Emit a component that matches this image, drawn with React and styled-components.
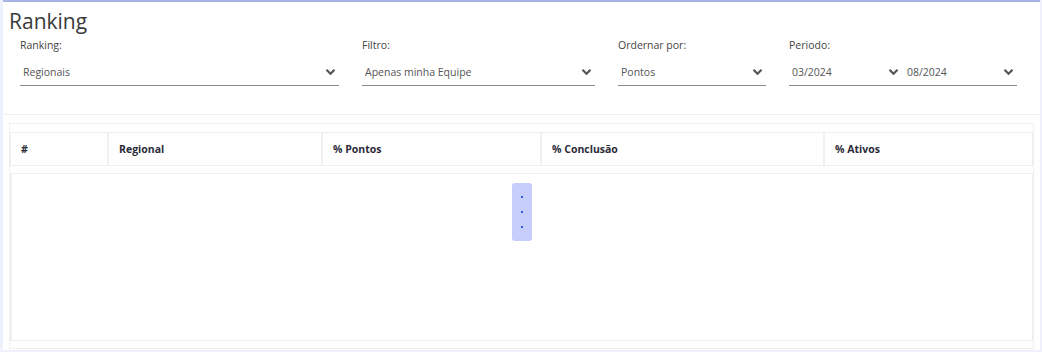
import styled, { createGlobalStyle } from 'styled-components';

const GlobalStyle = createGlobalStyle`
  html, body {
    margin: 0;
    padding: 0;
    background: #eef0fb;
    font-family: "Open Sans", "Liberation Sans", sans-serif;
  }
`;

const filters = [
  { label: 'Ranking:', width: 319, values: ['Regionais'] },
  { label: 'Filtro:', width: 233, values: ['Apenas minha Equipe'] },
  { label: 'Ordernar por:', width: 148, values: ['Pontos'] },
  { label: 'Periodo:', width: 228, values: ['03/2024', '08/2024'] },
];

const columns = [
  { title: '#', width: 96 },
  { title: 'Regional', width: 214 },
  { title: '% Pontos', width: 219 },
  { title: '% Conclusão', width: 283 },
  { title: '% Ativos', width: 209 },
];

const Chevron = () => (
  <svg width="11" height="8" viewBox="0 0 11 8">
    <path d="M1.5 1.8 L5.5 5.8 L9.5 1.8" fill="none" stroke="#555" strokeWidth="2.2" />
  </svg>
);

const App = () => (
  <>
    <GlobalStyle />
    <Page>
      <Header>
        <Title>Ranking</Title>
        <FilterRow>
          {filters.map(f => (
            <Field key={f.label} $width={f.width}>
              <Label>{f.label}</Label>
              <SelectGroup>
                {f.values.map(v => (
                  <Select key={v}>
                    <span>{v}</span>
                    <Chevron />
                  </Select>
                ))}
              </SelectGroup>
            </Field>
          ))}
        </FilterRow>
      </Header>
      <TableSection>
        <TableCard>
          <HeadRow>
            {columns.map(c => (
              <HeadCell key={c.title} $width={c.width}>{c.title}</HeadCell>
            ))}
          </HeadRow>
          <Body>
            <Loader>
              <Dot />
              <Dot />
              <Dot />
            </Loader>
          </Body>
        </TableCard>
      </TableSection>
    </Page>
  </>
);

const Page = styled.div`
  margin: 0 2px 0 3px;
  background: #fff;
  border-top: 2px solid #a9b4e6;
  height: 350px;
  box-sizing: border-box;
`;

const Header = styled.div`
  padding: 6px 0 0 6px;
  height: 113px;
  box-sizing: border-box;
  border-bottom: 1px solid #f1f1f1;
`;

const Title = styled.h1`
  margin: 0;
  font-size: 21px;
  font-weight: 400;
  color: #3a3a3a;
  line-height: 26px;
`;

const FilterRow = styled.div`
  display: flex;
  gap: 23px;
  padding-left: 11px;
  margin-top: 4px;
`;

const Field = styled.div`
  width: ${p => p.$width}px;
  display: flex;
  flex-direction: column;
`;

const Label = styled.div`
  font-size: 10.5px;
  color: #444;
  line-height: 14px;
`;

const SelectGroup = styled.div`
  display: flex;
  gap: 2px;
  margin-top: 8px;
  border-bottom: 1px solid #888;
`;

const Select = styled.div`
  flex: 1;
  display: flex;
  align-items: center;
  justify-content: space-between;
  height: 23px;
  padding: 0 3px 2px 3px;
  font-size: 10.5px;
  color: #555;
`;

const TableSection = styled.div`
  padding: 8px 6px 0 6px;
`;

const TableCard = styled.div`
  border: 1px solid #f0f0f0;
  padding: 8px 0 8px 0;
  height: 226px;
  box-sizing: border-box;
`;

const HeadRow = styled.div`
  display: flex;
  border: 1px solid #eeeeee;
  height: 34px;
  box-sizing: border-box;
`;

const HeadCell = styled.div`
  width: ${p => p.$width}px;
  flex-shrink: 0;
  display: flex;
  align-items: center;
  padding-left: 10px;
  box-sizing: border-box;
  font-size: 10.5px;
  font-weight: 700;
  color: #2b2b3a;
  border-left: 2px solid #f1f1f1;
  &:first-child {
    border-left: none;
  }
  &:last-child {
    flex: 1;
  }
`;

const Body = styled.div`
  margin-top: 7px;
  border: 1px solid #eeeeee;
  border-width: 1px 1px 1px 2px;
  height: 168px;
  box-sizing: border-box;
  display: flex;
  justify-content: center;
  padding-top: 9px;
`;

const Loader = styled.div`
  width: 20px;
  height: 58px;
  background: #c8cefc;
  border-radius: 3px;
  display: flex;
  flex-direction: column;
  align-items: center;
  justify-content: center;
  gap: 13px;
`;

const Dot = styled.span`
  width: 2px;
  height: 2px;
  background: #2d5bf0;
`;

export default App;
